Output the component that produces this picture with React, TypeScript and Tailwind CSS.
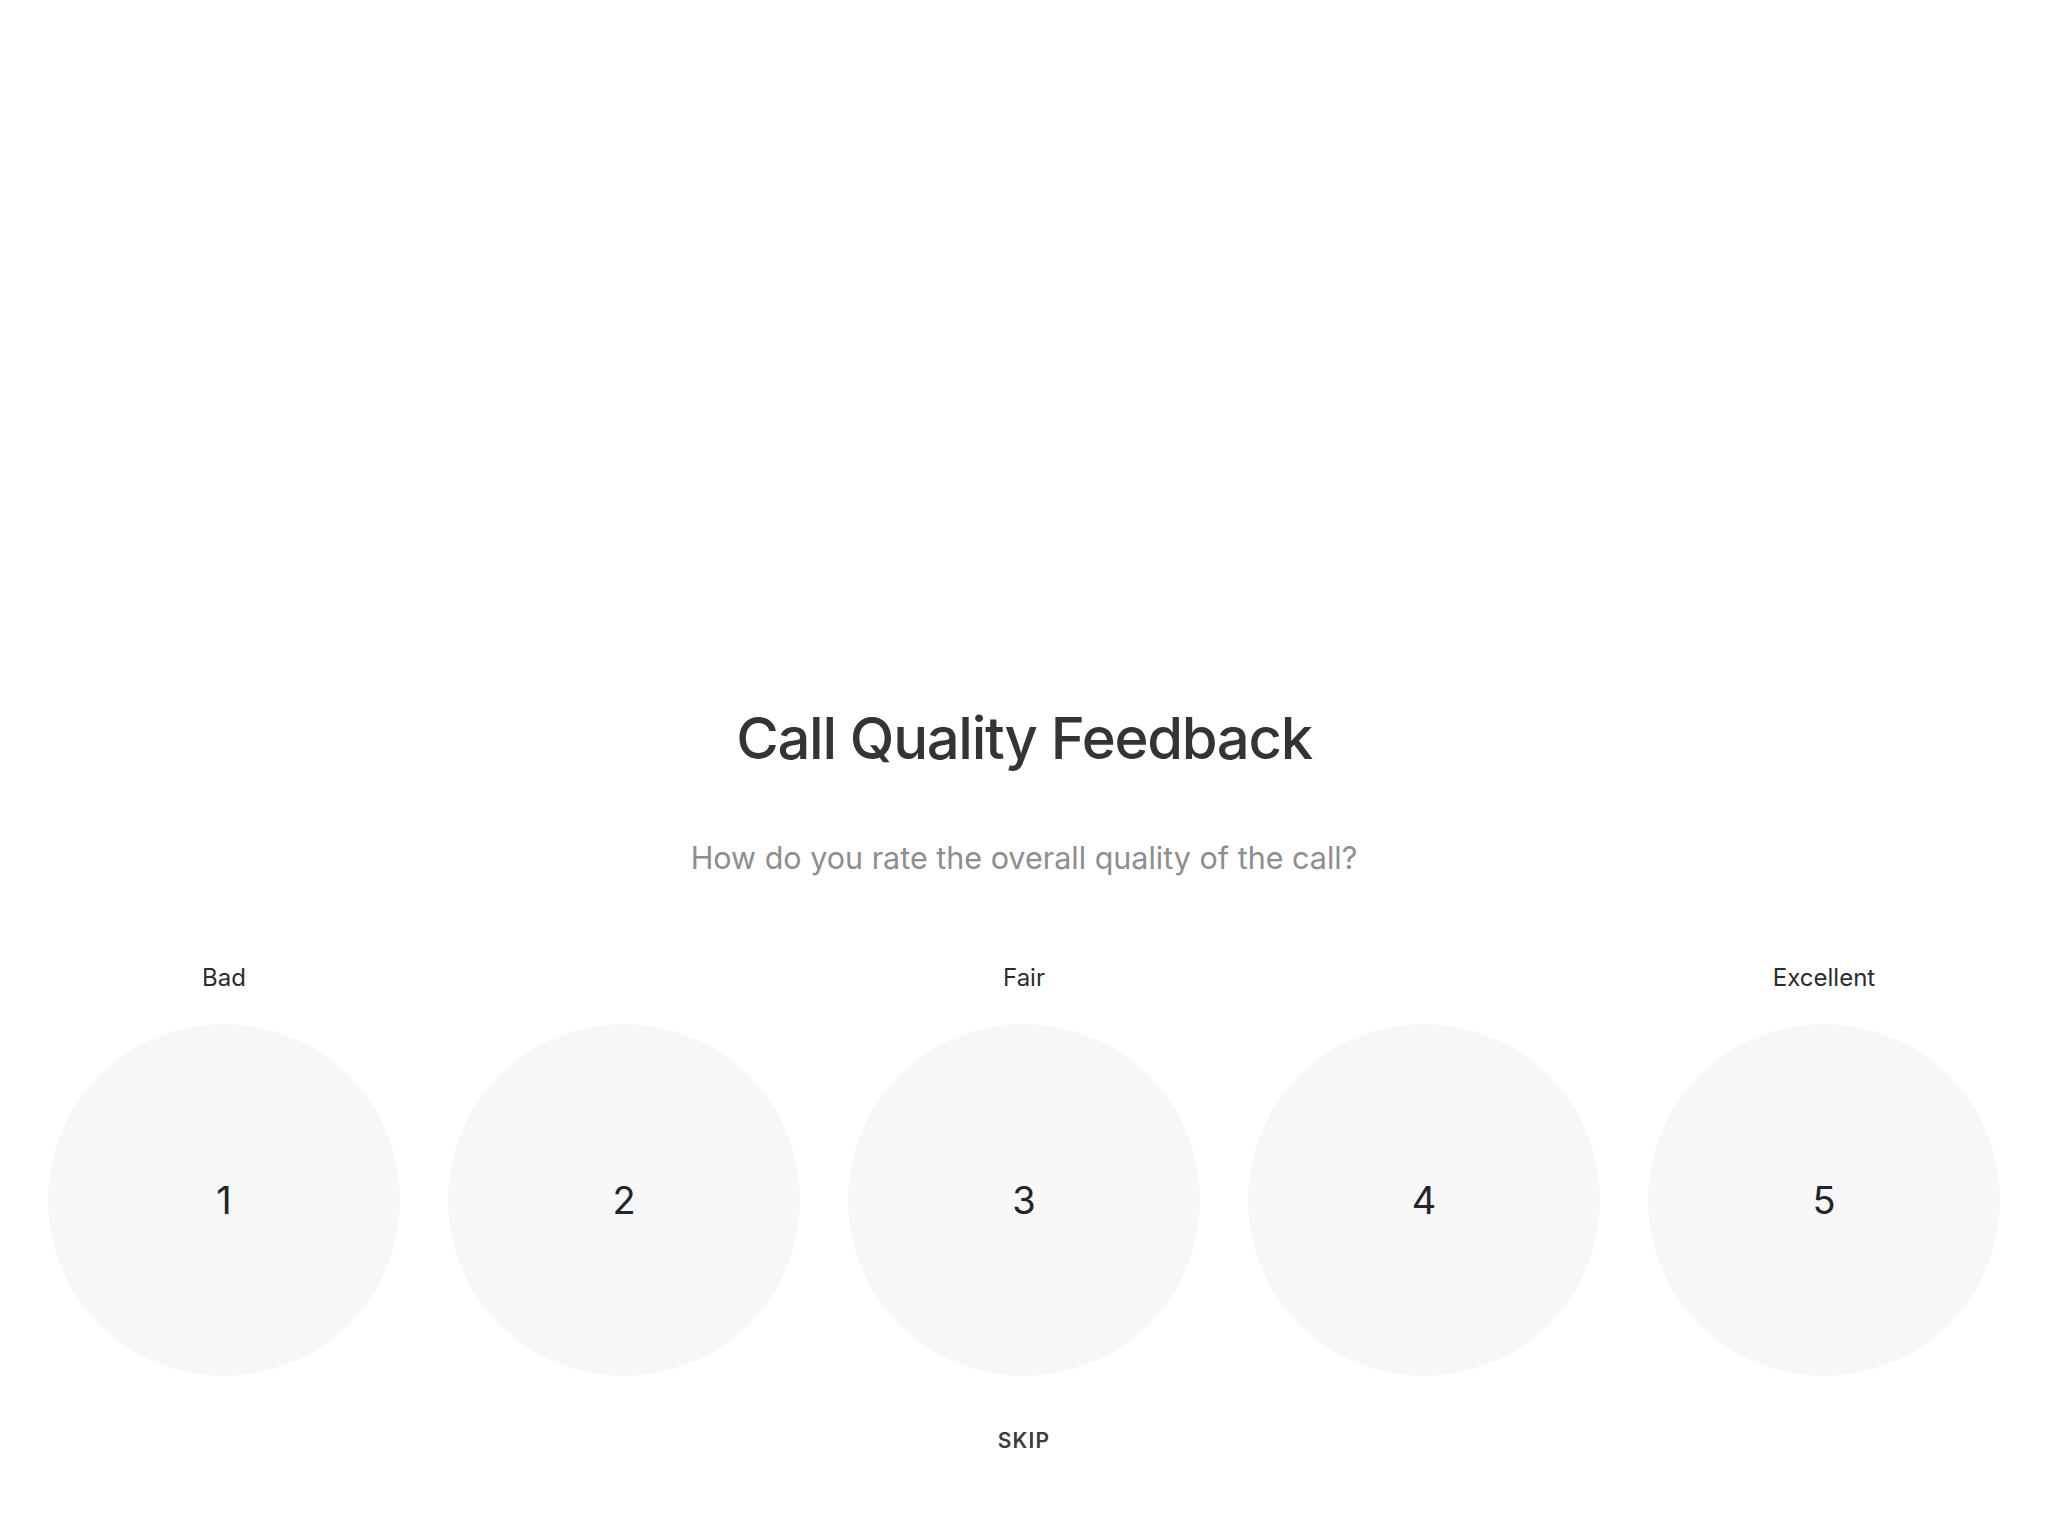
const RATINGS = [
    { value: 1, label: "Bad" },
    { value: 2, label: "" },
    { value: 3, label: "Fair" },
    { value: 4, label: "" },
    { value: 5, label: "Excellent" },
];

export default function App() {
    return (
        <div
            className="w-full h-[1536px] bg-white flex flex-col items-center pt-[702px]"
            style={{ fontFamily: "Inter, 'Noto Sans', sans-serif" }}
        >
            <h1 className="text-[58px] leading-[72px] font-medium text-[#323438] tracking-[-1.3px]">
                Call Quality Feedback
            </h1>
            <p className="mt-[66px] text-[30.5px] leading-[36px] text-[#8e8e90]">
                How do you rate the overall quality of the call?
            </p>

            {/* ── Rating circles ── */}
            <div className="mt-[88px] w-full px-[48px] flex gap-[48px]">
                {RATINGS.map(r => (
                    <div key={r.value} className="flex flex-col items-center">
                        <span className="h-[28px] text-[24px] leading-[28px] text-[#2a2c30]">
                            {r.label}
                        </span>
                        <button className="mt-[32px] w-[352px] h-[352px] rounded-full bg-[#f7f7f7] flex items-center justify-center text-[38px] text-[#222428]">
                            {r.value}
                        </button>
                    </div>
                ))}
            </div>

            <button className="mt-[53px] text-[21px] leading-[24px] font-semibold tracking-[1.2px] text-[#3a3c40]">
                SKIP
            </button>
        </div>
    );
}
